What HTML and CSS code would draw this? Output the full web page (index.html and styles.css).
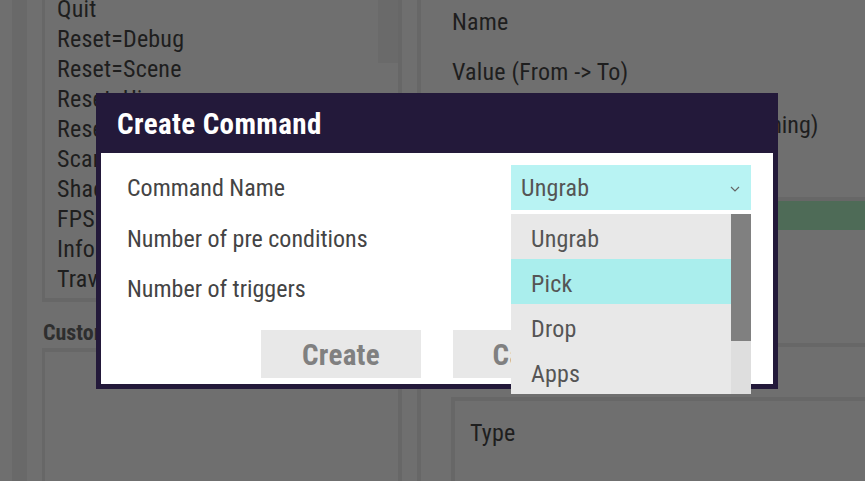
FILE: index.html
```html
<!DOCTYPE html>
<html>
<head>
<meta charset="utf-8">
<link rel="stylesheet" href="styles.css">
</head>
<body>
<div class="app">
  <div class="rail"><div class="rail-strip"></div></div>
  <div class="left">
    <div class="listbox">
      <div class="list">
        <div class="item">Quit</div>
        <div class="item">Reset=Debug</div>
        <div class="item">Reset=Scene</div>
        <div class="item">Reset=Ui</div>
        <div class="item">Reset=All</div>
        <div class="item">Scan</div>
        <div class="item">Shadows</div>
        <div class="item">FPS</div>
        <div class="item">Info</div>
        <div class="item">Travel</div>
        <div class="item">Grab</div>
      </div>
      <div class="vscroll"><div class="vthumb"></div></div>
    </div>
    <div class="heading">Custom Commands</div>
    <div class="box2"></div>
  </div>
  <div class="gutter"></div>
  <div class="right">
    <div class="fields">
      <div class="field">Name</div>
      <div class="field">Value (From -&gt; To)</div>
      <div class="field third">Interpolation Mode (Linear Smoothing)</div>
    </div>
    <div class="greenbar"></div>
    <div class="lowerbox">
      <div class="typebox"><div class="field">Type</div></div>
    </div>
  </div>
</div>

<div class="dialog">
  <div class="dialog-title">Create Command</div>
  <div class="dialog-body">
    <div class="rows">
      <div class="row">
        <span class="label">Command Name</span>
        <div class="select">
          <span>Ungrab</span>
          <svg class="chev" width="10" height="6" viewBox="0 0 10 6"><path d="M1 1 L5 5 L9 1" fill="none" stroke="#666" stroke-width="1.2"/></svg>
        </div>
      </div>
      <div class="row"><span class="label">Number of pre conditions</span></div>
      <div class="row"><span class="label">Number of triggers</span></div>
    </div>
    <div class="buttons">
      <div class="btn">Create</div>
      <div class="btn">Cancel</div>
    </div>
  </div>
</div>

<div class="dropdown">
  <div class="options">
    <div class="opt">Ungrab</div>
    <div class="opt active">Pick</div>
    <div class="opt">Drop</div>
    <div class="opt">Apps</div>
  </div>
  <div class="dscroll"><div class="dthumb"></div></div>
</div>
</body>
</html>
```
FILE: styles.css
```css
html, body {
  margin: 0;
  padding: 0;
}
body {
  width: 865px;
  height: 481px;
  overflow: hidden;
  background: #6f6f6f;
  font-family: "Liberation Sans Narrow", "Roboto Condensed", "DejaVu Sans Condensed", sans-serif;
  position: relative;
}
.app {
  display: flex;
  height: 481px;
}
.rail {
  width: 42px;
  padding-left: 12px;
  box-sizing: border-box;
  display: flex;
}
.rail-strip {
  width: 15px;
  background: #696969;
}
.left {
  width: 360px;
  display: flex;
  flex-direction: column;
}
.listbox {
  margin-top: -10px;
  height: 312px;
  box-sizing: border-box;
  border: 4px solid #676767;
  border-left-width: 3px;
  display: flex;
  overflow: hidden;
}
.list {
  flex: 1;
  padding: 0 0 0 12px;
}
.item {
  height: 30px;
  line-height: 30px;
  font-size: 24px;
  color: #1e1e1e;
  letter-spacing: 0.2px;
  white-space: nowrap;
}
.vscroll {
  width: 20px;
}
.vthumb {
  height: 69px;
  background: #6a6a6a;
}
.heading {
  margin: 17px 0 0 1px;
  height: 29px;
  font-size: 22px;
  font-weight: bold;
  color: #2e2e2e;
  line-height: 28px;
}
.box2 {
  flex: 1;
  border: 4px solid #676767;
  border-left-width: 3px;
  border-bottom: none;
}
.gutter {
  width: 15px;
  border-right: 4px solid #676767;
}
.right {
  flex: 1;
  display: flex;
  flex-direction: column;
}
.fields {
  padding: 0 0 0 31px;
  height: 197px;
  margin-top: -3px;
}
.field {
  height: 50px;
  line-height: 50px;
  font-size: 24px;
  color: #1e1e1e;
  letter-spacing: 0.2px;
  white-space: nowrap;
}
.field.third {
  margin-top: 3px;
  letter-spacing: 0;
}
.greenbar {
  margin-top: 3px;
  height: 29px;
  border-top: 4px solid #676767;
  background: #4e6b57;
  margin-left: 31px;
}
.lowerbox {
  margin-top: 113px;
  flex: 1;
  border-top: 4px solid #676767;
  padding: 50px 0 0 30px;
}
.typebox {
  height: 100%;
  border-top: 4px solid #676767;
  border-left: 4px solid #676767;
  padding-left: 15px;
  padding-top: 7px;
  box-sizing: border-box;
}

/* dialog */
.dialog {
  position: absolute;
  left: 96px;
  top: 93px;
  width: 682px;
  height: 296px;
  background: #23193a;
  display: flex;
  flex-direction: column;
  box-sizing: border-box;
  padding: 0 5px 5px 5px;
}
.dialog-title {
  height: 60px;
  line-height: 62px;
  padding-left: 16px;
  color: #ffffff;
  font-weight: bold;
  font-size: 29px;
  letter-spacing: 0.4px;
}
.dialog-body {
  flex: 1;
  background: #ffffff;
  display: flex;
  flex-direction: column;
}
.rows {
  padding: 12px 22px 0 26px;
}
.row {
  height: 50px;
  display: flex;
  align-items: center;
  justify-content: space-between;
}
.row:first-child {
  height: 45px;
  margin-bottom: 4px;
}
.label {
  font-size: 24px;
  color: #444444;
  letter-spacing: 0;
}
.select {
  width: 240px;
  height: 45px;
  background: #b8f3f3;
  box-sizing: border-box;
  padding: 0 11px 0 10px;
  display: flex;
  align-items: center;
  justify-content: space-between;
  font-size: 24px;
  color: #555;
  letter-spacing: 0.2px;
}
.chev {
  margin-top: 2px;
}
.buttons {
  margin-top: 16px;
  display: flex;
  justify-content: center;
  gap: 32px;
}
.btn {
  width: 160px;
  height: 48px;
  background: #e8e8e8;
  color: #808080;
  font-weight: bold;
  font-size: 29px;
  text-align: center;
  line-height: 50px;
  letter-spacing: 0.3px;
}

/* dropdown list */
.dropdown {
  position: absolute;
  left: 511px;
  top: 214px;
  width: 240px;
  height: 180px;
  display: flex;
  background: #e8e8e8;
}
.options {
  flex: 1;
}
.opt {
  height: 45px;
  line-height: 50px;
  padding-left: 20px;
  font-size: 24px;
  color: #555;
  letter-spacing: 0.2px;
}
.opt.active {
  background: #aaeeed;
}
.dscroll {
  width: 20px;
  background: #dedede;
}
.dthumb {
  height: 127px;
  background: #808080;
}
```
